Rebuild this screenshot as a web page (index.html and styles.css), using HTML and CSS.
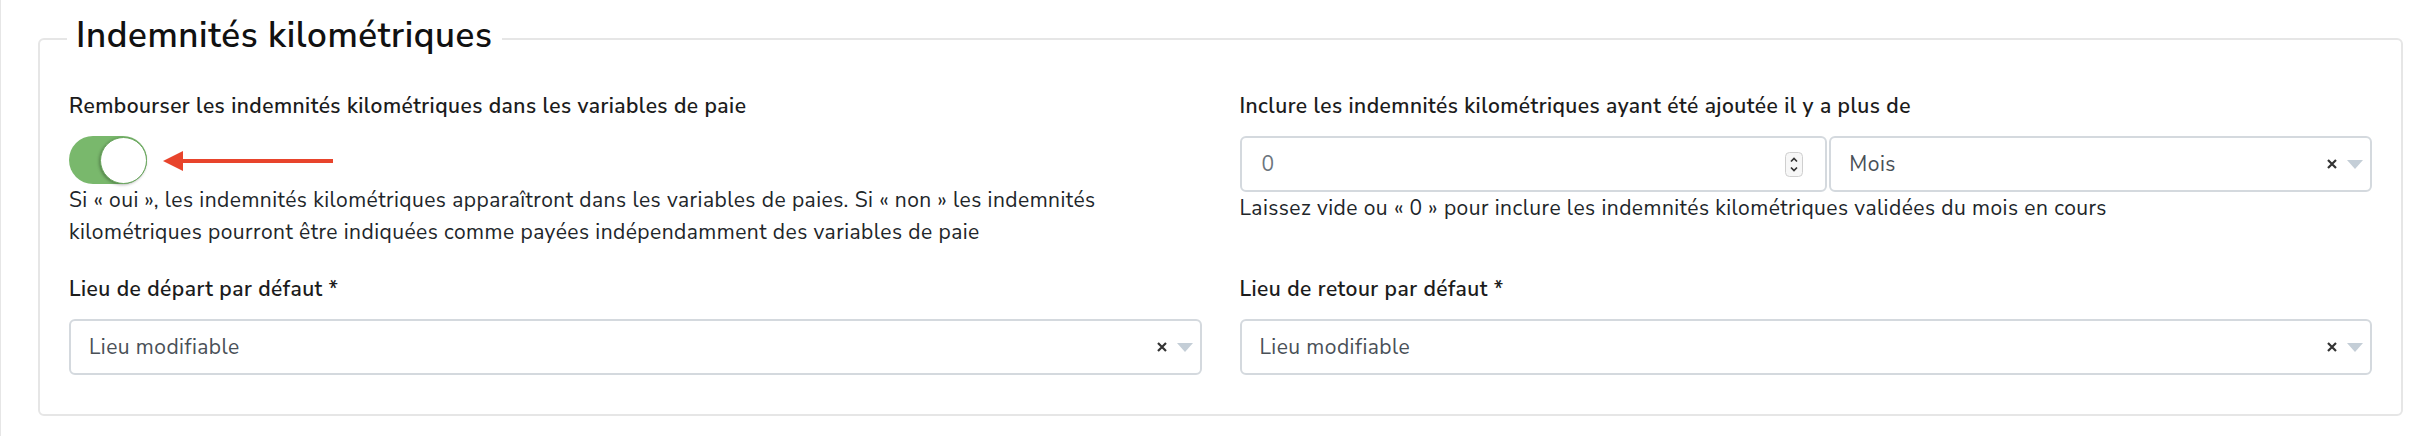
FILE: index.html
```html
<!DOCTYPE html>
<html lang="fr">
<head>
    <meta charset="UTF-8">
    <meta name="viewport" content="width=device-width, initial-scale=1.0">
    <title>Indemnités kilométriques</title>
    <link rel="stylesheet" href="styles.css">
</head>
<body>
    <div class="page">
        <fieldset class="settings">
            <legend>Indemnités kilométriques</legend>
            <div class="fields">
                <div class="field">
                    <label class="field-label">Rembourser les indemnités kilométriques dans les variables de paie</label>
                    <div class="toggle-row">
                        <span class="switch on"><span class="knob"></span></span>
                        <svg class="hint-arrow" width="170" height="22" viewBox="0 0 170 22">
                            <path d="M0 11 L20 1 L20 21 Z" fill="#e8442c"/>
                            <rect x="18" y="9" width="152" height="4" fill="#e8442c"/>
                        </svg>
                    </div>
                    <p class="help">Si « oui », les indemnités kilométriques apparaîtront dans les variables de paies. Si « non » les indemnités kilométriques pourront être indiquées comme payées indépendamment des variables de paie</p>
                </div>

                <div class="field">
                    <label class="field-label">Inclure les indemnités kilométriques ayant été ajoutée il y a plus de</label>
                    <div class="delay-group">
                        <div class="input number">
                            <span class="value muted">0</span>
                            <svg class="spinner" width="18" height="25" viewBox="0 0 18 25">
                                <rect x="0.5" y="0.5" width="17" height="24" rx="4" fill="#f7f7f7" stroke="#cfcfcf"/>
                                <path d="M6 9.5 L9 6.5 L12 9.5" fill="none" stroke="#333" stroke-width="1.7"/>
                                <path d="M6 15.5 L9 18.5 L12 15.5" fill="none" stroke="#333" stroke-width="1.7"/>
                            </svg>
                        </div>
                        <div class="input select">
                            <span class="value">Mois</span>
                            <span class="select-actions">
                                <svg width="10" height="10" viewBox="0 0 10 10"><path d="M1 1 L9 9 M9 1 L1 9" stroke="#333" stroke-width="2.2"/></svg>
                                <svg width="16" height="9" viewBox="0 0 16 9"><path d="M0 0 H16 L8 9 Z" fill="#c4ced7"/></svg>
                            </span>
                        </div>
                    </div>
                    <p class="help">Laissez vide ou « 0 » pour inclure les indemnités kilométriques validées du mois en cours</p>
                </div>

                <div class="field">
                    <label class="field-label">Lieu de départ par défaut *</label>
                    <div class="input select">
                        <span class="value">Lieu modifiable</span>
                        <span class="select-actions">
                            <svg width="10" height="10" viewBox="0 0 10 10"><path d="M1 1 L9 9 M9 1 L1 9" stroke="#333" stroke-width="2.2"/></svg>
                            <svg width="16" height="9" viewBox="0 0 16 9"><path d="M0 0 H16 L8 9 Z" fill="#c4ced7"/></svg>
                        </span>
                    </div>
                </div>

                <div class="field">
                    <label class="field-label">Lieu de retour par défaut *</label>
                    <div class="input select">
                        <span class="value">Lieu modifiable</span>
                        <span class="select-actions">
                            <svg width="10" height="10" viewBox="0 0 10 10"><path d="M1 1 L9 9 M9 1 L1 9" stroke="#333" stroke-width="2.2"/></svg>
                            <svg width="16" height="9" viewBox="0 0 16 9"><path d="M0 0 H16 L8 9 Z" fill="#c4ced7"/></svg>
                        </span>
                    </div>
                </div>
            </div>
        </fieldset>
    </div>
</body>
</html>
```

FILE: styles.css
```css
/* Settings page styles */
* {
    margin: 0;
    padding: 0;
    box-sizing: border-box;
}

body {
    font-family: "Nunito Sans", Lato, sans-serif;
    background-color: #ffffff;
    color: #212529;
}

.page {
    min-height: 100vh;
    border-left: 1px solid #e6e6e6;
    padding: 16px 27px 0 37px;
}

.settings {
    border: 2px solid #e6e6e6;
    border-radius: 6px;
    padding: 28px 29px 39px;
    min-width: 0;
}

.settings legend {
    font-size: 35px;
    line-height: 40px;
    font-weight: 600;
    letter-spacing: 0.6px;
    color: #111;
    padding: 0 9px 6px;
    margin-left: -2px;
}

.fields {
    display: grid;
    grid-template-columns: 1fr 1fr;
    column-gap: 38px;
    row-gap: 25px;
}

.field {
    display: flex;
    flex-direction: column;
}

.field-label {
    font-size: 21px;
    line-height: 32px;
    font-weight: 600;
    letter-spacing: 0.45px;
    color: #1c1c1c;
    margin-bottom: 14px;
}

.help {
    font-size: 21px;
    line-height: 32px;
    letter-spacing: 0.45px;
    color: #212529;
}

/* Toggle switch */
.toggle-row {
    display: flex;
    align-items: center;
    gap: 16px;
}

.switch {
    width: 78px;
    height: 48px;
    border-radius: 24px;
    background-color: #ccc;
    display: flex;
    align-items: center;
}

.switch.on {
    background-color: #79b86c;
    justify-content: flex-end;
}

.knob {
    width: 47px;
    height: 47px;
    border-radius: 50%;
    background-color: #fff;
    border: 1px solid #68a65c;
    box-shadow: -1px 1px 3px rgba(0, 0, 0, 0.3);
}

.hint-arrow {
    margin-top: 2px;
}

/* Inputs */
.delay-group {
    display: grid;
    grid-template-columns: 52fr 48fr;
    gap: 2px;
}

.input {
    height: 56px;
    border: 2px solid #d4d9de;
    border-radius: 6px;
    padding: 0 22px 0 18px;
    display: flex;
    align-items: center;
    justify-content: space-between;
    font-size: 21px;
    line-height: 32px;
    letter-spacing: 0.45px;
    color: #495057;
    background-color: #fff;
}

.input.select {
    padding-right: 7px;
}

.value.muted {
    color: #6c757d;
    margin-left: 2px;
}

.select-actions {
    display: flex;
    align-items: center;
    gap: 10px;
}
```
